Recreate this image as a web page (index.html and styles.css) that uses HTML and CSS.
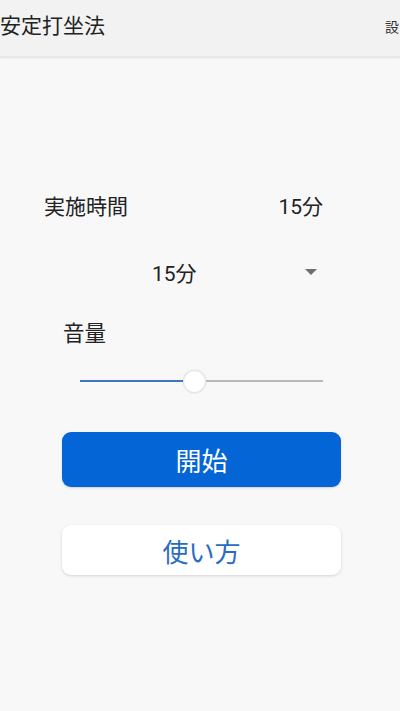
FILE: index.html
```html
<!DOCTYPE html>
<html lang="ja">
<head>
<meta charset="utf-8">
<link rel="stylesheet" href="styles.css">
</head>
<body>
<header class="appbar">
  <span class="title">安定打坐法</span>
  <span class="action">設</span>
</header>
<main class="content">
  <div class="row">
    <span class="label">実施時間</span>
    <span class="value">15分</span>
  </div>
  <div class="dropdown">
    <span class="dd-text">15分</span>
    <svg class="dd-arrow" width="12" height="6" viewBox="0 0 12 6"><path d="M0 0 L12 0 L6 6 Z" fill="#6f6f6f"/></svg>
  </div>
  <div class="volume-label">音量</div>
  <div class="slider">
    <div class="track-active"></div>
    <div class="thumb"></div>
    <div class="track-rest"></div>
  </div>
  <button class="btn btn-primary">開始</button>
  <button class="btn btn-secondary">使い方</button>
</main>
</body>
</html>
```

FILE: styles.css
```css
* { box-sizing: border-box; }
html, body {
  margin: 0;
  padding: 0;
  width: 400px;
  height: 711px;
  overflow: hidden;
  background: #f8f8f8;
  font-family: Roboto, "Noto Sans CJK JP", "Noto Sans", sans-serif;
  color: #222;
}
.appbar {
  height: 57px;
  background: #f2f2f2;
  display: flex;
  align-items: center;
  justify-content: space-between;
  box-shadow: 0 1px 2px rgba(0,0,0,0.10);
  border-bottom: 1px solid #e8e8e8;
  overflow: hidden;
  position: relative;
}
.title {
  font-size: 21px;
  margin-left: 0;
  color: #222;
  line-height: 1;
  margin-top: -3px;
}
.action {
  font-size: 14px;
  color: #333;
  margin-right: 1px;
  line-height: 1;
  margin-top: -3px;
}
.content {
  display: flex;
  flex-direction: column;
  padding-top: 133px;
}
.row {
  display: flex;
  justify-content: space-between;
  align-items: center;
  margin-left: 44px;
  width: 279px;
  height: 30px;
  font-size: 21px;
}
.dropdown {
  display: flex;
  justify-content: space-between;
  align-items: center;
  margin-top: 37px;
  margin-left: 152px;
  width: 170px;
  height: 30px;
  font-size: 21px;
}
.dd-arrow { margin-right: 5px; }
.volume-label {
  margin-top: 32px;
  margin-left: 63px;
  height: 30px;
  line-height: 30px;
  font-size: 21.5px;
}
.slider {
  margin-top: 20px;
  margin-left: 80px;
  width: 243px;
  height: 24px;
  display: flex;
  align-items: center;
}
.track-active {
  width: 103px;
  height: 2px;
  background: #3f76bd;
}
.thumb {
  width: 23px;
  height: 23px;
  border-radius: 50%;
  background: #fff;
  border: 1px solid #e4e4e4;
  box-shadow: 0 0 2px rgba(0,0,0,0.12);
  flex: none;
}
.track-rest {
  flex: 1;
  height: 2px;
  background: #b9b9b9;
}
.btn {
  margin-left: 62px;
  width: 279px;
  border: none;
  font-family: inherit;
  font-size: 26px;
  border-radius: 9px;
  padding: 0;
}
.btn-primary {
  margin-top: 39px;
  height: 55px;
  background: #0465d6;
  color: #fff;
  box-shadow: 0 1px 2px rgba(0,0,0,0.15);
}
.btn-secondary {
  margin-top: 38px;
  height: 50px;
  background: #fff;
  color: #2a6cc0;
  box-shadow: 0 1px 3px rgba(0,0,0,0.15);
}
```
